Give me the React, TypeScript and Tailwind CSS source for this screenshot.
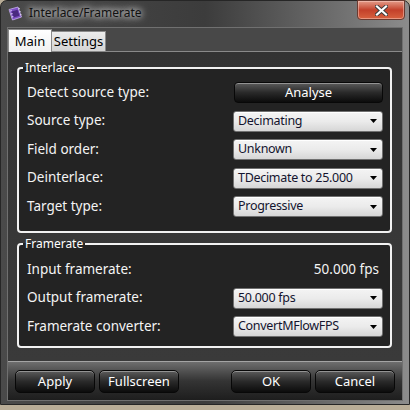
import { ReactNode } from 'react';

const font = "font-['Noto_Sans','Open_Sans',sans-serif]";

const Arrow = () => (
  <svg width="7" height="4" viewBox="0 0 7 4" className="shrink-0">
    <path d="M0 0h7L3.5 4z" fill="#000" />
  </svg>
);

const Combo = ({ value }: { value: string }) => (
  <div className="flex h-[21px] w-[150px] items-center justify-between rounded-[3px] border border-[#707070] bg-gradient-to-b from-[#f4f4f4] via-[#ebebeb] to-[#d6d6d6] pl-[4px] pr-[5px] shadow-[inset_0_1px_0_#fff]">
    <span className="text-[12.5px] leading-none tracking-[-0.3px] text-[#14142e]">{value}</span>
    <Arrow />
  </div>
);

const DarkButton = ({ children, className = '' }: { children: ReactNode; className?: string }) => (
  <button
    className={`flex items-center justify-center border border-[#080808] bg-gradient-to-b from-[#5c5c5c] via-[#2a2a2a] to-[#0c0c0c] text-[13px] leading-none text-white shadow-[inset_0_1px_0_rgba(255,255,255,0.35)] ${className}`}
  >
    {children}
  </button>
);

const Row = ({ label, children }: { label: string; children: ReactNode }) => (
  <div className="flex h-[21px] items-center justify-between">
    <span className="text-[13.5px] leading-none text-[#f4f4f4]">{label}</span>
    {children}
  </div>
);

const Group = ({ title, children, className = '' }: { title: string; children: ReactNode; className?: string }) => (
  <fieldset className={`rounded-[4px] border-2 border-[#f2f2f2] bg-[#232323] ${className}`}>
    <legend className="ml-[4px] px-[2px] text-[12px] leading-[14px] text-white">{title}</legend>
    {children}
  </fieldset>
);

export default function App() {
  return (
    <div className={`h-[410px] w-[410px] overflow-hidden bg-[#b9ad97] ${font}`}>
      <div className="flex h-[405px] flex-col rounded-t-[7px] border border-[#262626] bg-gradient-to-r from-[#4a4a4a] via-[#3c3c3c] to-[#8c8c8c] pb-[3px]">
        {/* title bar */}
        <div className="flex h-[26px] shrink-0 items-start">
          <svg width="15" height="15" viewBox="0 0 15 15" className="ml-[7px] mt-[5px]">
            <path d="M1 3.5L10 1l3.5 10L4.5 14z" fill="#7d4fc4" stroke="#c9b2f0" strokeWidth="0.8" />
            <path d="M3.5 5.5l6-1.8 2 6-6 1.8z" fill="#4a2a80" />
            <path d="M2.2 5l1.5-.4M3 8l1.5-.4M3.8 11l1.5-.4M10.3 3l1.5-.4M11.1 6l1.5-.4M11.9 9l1.5-.4" stroke="#e8dcff" strokeWidth="1" />
          </svg>
          <span className="ml-[6px] mt-[5px] text-[12px] leading-[14px] text-[#111] [text-shadow:0_0_6px_#fff,0_0_10px_rgba(255,255,255,0.8)]">
            Interlace/Framerate
          </span>
          <div className="ml-auto mr-[4px] -mt-px flex h-[20px] w-[48px] items-center justify-center rounded-b-[4px] border border-[#6a3a30] bg-gradient-to-b from-[#e39a88] via-[#c3402a] to-[#d7613f] shadow-[inset_0_0_0_1px_rgba(255,220,210,0.45)]">
            <svg width="13" height="11" viewBox="0 0 13 11">
              <path d="M2 1.5l9 8M11 1.5l-9 8" stroke="#3a3a3a" strokeWidth="4" strokeLinecap="square" />
              <path d="M2 1.5l9 8M11 1.5l-9 8" stroke="#fff" strokeWidth="2.2" strokeLinecap="square" />
            </svg>
          </div>
        </div>

        {/* client area */}
        <div className="mx-[6px] flex flex-1 flex-col border border-[#707070] bg-[#343434]">
          <div className="flex h-[24px] shrink-0 items-end border-b border-[#8a8a8a] bg-[#484848]">
            <div className="relative z-10 -mb-px flex h-[23px] w-[44px] items-center justify-center border border-b-0 border-[#8a8a8a] bg-gradient-to-b from-white to-[#f0f0f0] text-[13px] leading-none text-black">
              Main
            </div>
            <div className="flex h-[20px] w-[54px] items-center justify-center border border-b-0 border-l-0 border-[#8a8a8a] bg-gradient-to-b from-[#ececec] to-[#d4d4d4] text-[13px] leading-none text-black">
              Settings
            </div>
          </div>

          <div className="flex flex-1 flex-col bg-gradient-to-b from-[#333333] to-[#3a3a3a] pl-[9px] pr-[10px] pt-[9px]">
            <Group title="Interlace">
              <div className="flex flex-col gap-[7.5px] pb-[14px] pl-[8px] pr-[7px] pt-[7px]">
                <Row label="Detect source type:">
                  <DarkButton className="h-[21px] w-[149px] rounded-[4px]">Analyse</DarkButton>
                </Row>
                <Row label="Source type:">
                  <Combo value="Decimating" />
                </Row>
                <Row label="Field order:">
                  <Combo value="Unknown" />
                </Row>
                <Row label="Deinterlace:">
                  <Combo value="TDecimate to 25.000" />
                </Row>
                <Row label="Target type:">
                  <Combo value="Progressive" />
                </Row>
              </div>
            </Group>

            <Group title="Framerate" className="mt-[4px]">
              <div className="flex flex-col gap-[7.5px] pb-[9px] pl-[8px] pr-[7px] pt-[8px]">
                <Row label="Input framerate:">
                  <span className="w-[150px] pr-[4px] text-right text-[13.5px] leading-none text-[#f4f4f4]">50.000 fps</span>
                </Row>
                <Row label="Output framerate:">
                  <Combo value="50.000 fps" />
                </Row>
                <Row label="Framerate converter:">
                  <Combo value="ConvertMFlowFPS" />
                </Row>
              </div>
            </Group>
          </div>

          <div className="flex h-[39px] shrink-0 items-start border-t border-[#a4a4a4] bg-gradient-to-b from-[#6e6e6e] via-[#343434] to-[#1e1e1e] px-[7px] pt-[8px]">
            <DarkButton className="h-[23px] w-[80px] rounded-[5px]">Apply</DarkButton>
            <DarkButton className="ml-[4px] h-[23px] w-[80px] rounded-[5px]">Fullscreen</DarkButton>
            <DarkButton className="ml-auto h-[23px] w-[80px] rounded-[5px]">OK</DarkButton>
            <DarkButton className="ml-[4px] h-[23px] w-[80px] rounded-[5px]">Cancel</DarkButton>
          </div>
        </div>
      </div>
    </div>
  );
}
